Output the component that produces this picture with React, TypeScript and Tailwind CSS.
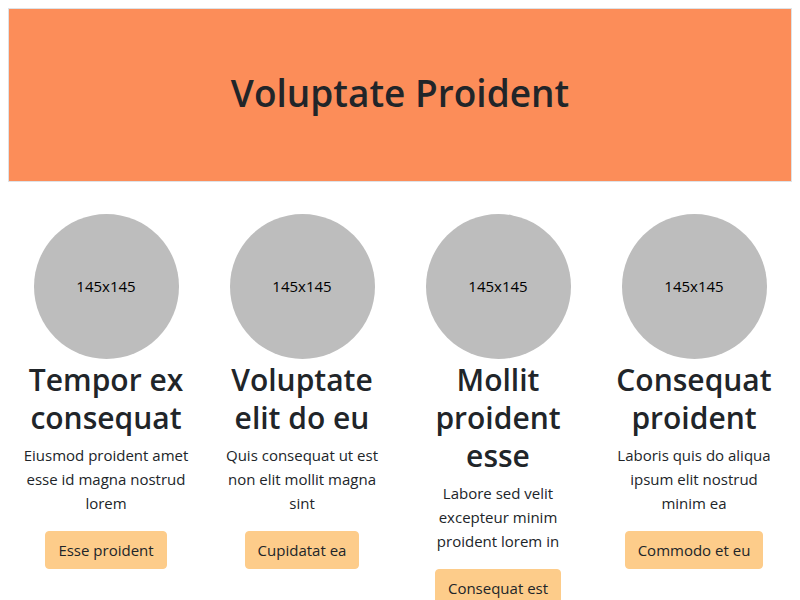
const cards = [
  { title: "Tempor ex consequat", text: "Eiusmod proident amet esse id magna nostrud lorem", action: "Esse proident" },
  { title: "Voluptate elit do eu", text: "Quis consequat ut est non elit mollit magna sint", action: "Cupidatat ea" },
  { title: "Mollit proident esse", text: "Labore sed velit excepteur minim proident lorem in", action: "Consequat est" },
  { title: "Consequat proident", text: "Laboris quis do aliqua ipsum elit nostrud minim ea", action: "Commodo et eu" },
];

export default function App() {
  return (
    <main className="min-h-screen bg-white p-2 font-['Open_Sans','Noto_Sans',sans-serif] text-[15px] text-[#212529]">
      <header className="mb-6 border border-[#dee2e6] bg-[#fc8d59] px-8 py-15 text-center">
        <h1 className="mb-1 text-[37px] leading-12 font-semibold">Voluptate Proident</h1>
      </header>
      <section className="grid grid-cols-4">
        {cards.map((card) => (
          <article key={card.title} className="flex flex-col items-center px-3 pt-2 text-center">
            <div className="flex size-[145px] items-center justify-center rounded-full bg-[#bdbdbd] text-black">
              145x145
            </div>
            <h2 className="mt-0.5 mb-1.5 text-[30px] leading-[38px] font-semibold">{card.title}</h2>
            <p className="mb-4 leading-6">{card.text}</p>
            <button type="button" className="rounded border border-[#fdcc8a] bg-[#fdcc8a] px-3 py-1.5 leading-6">
              {card.action}
            </button>
          </article>
        ))}
      </section>
    </main>
  );
}
